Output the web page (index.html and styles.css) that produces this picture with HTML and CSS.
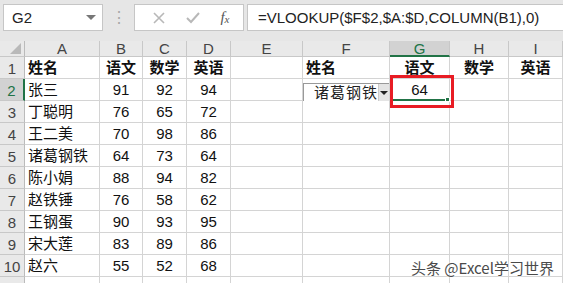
FILE: index.html
```html
<!DOCTYPE html>
<html lang="zh">
<head>
<meta charset="utf-8">
<link rel="stylesheet" href="styles.css">
</head>
<body>
<div class="toolbar">
  <div class="namebox"><span>G2</span><span class="nb-arrow"></span></div>
  <div class="dots">⋮</div>
  <div class="fbtns">
    <svg class="ic" width="14" height="14" viewBox="0 0 14 14"><path d="M2 2L12 12M12 2L2 12" stroke="#b8b8b8" stroke-width="1.6" fill="none"/></svg>
    <svg class="ic" width="16" height="14" viewBox="0 0 16 14"><path d="M2 7L6 11L14 2" stroke="#b8b8b8" stroke-width="2" fill="none"/></svg>
    <span class="fx">f<sub>x</sub></span>
  </div>
  <div class="formula">=VLOOKUP($F$2,$A:$D,COLUMN(B1),0)</div>
</div>
<div class="sheet">
  <div class="corner"><span class="tri"></span></div>
  <div class="ch">A</div><div class="ch">B</div><div class="ch">C</div><div class="ch">D</div><div class="ch">E</div><div class="ch">F</div><div class="ch sel">G</div><div class="ch">H</div><div class="ch">I</div>

  <div class="rh">1</div>
  <div class="c b">姓名</div><div class="c b ctr">语文</div><div class="c b ctr">数学</div><div class="c b ctr">英语</div><div class="c"></div><div class="c b">姓名</div><div class="c b ctr">语文</div><div class="c b ctr">数学</div><div class="c b ctr">英语</div>

  <div class="rh sel">2</div>
  <div class="c">张三</div><div class="c ctr">91</div><div class="c ctr">92</div><div class="c ctr">94</div><div class="c"></div>
  <div class="c"><div class="combo"><span class="combo-t">诸葛钢铁</span><span class="combo-b"><span class="dt"></span></span></div></div>
  <div class="c ctr active">64<span class="selline"></span><span class="handle"></span><span class="redbox"></span></div>
  <div class="c"></div><div class="c"></div>

  <div class="rh">3</div>
  <div class="c">丁聪明</div><div class="c ctr">76</div><div class="c ctr">65</div><div class="c ctr">72</div><div class="c"></div><div class="c"></div><div class="c"></div><div class="c"></div><div class="c"></div>
  <div class="rh">4</div>
  <div class="c">王二美</div><div class="c ctr">70</div><div class="c ctr">98</div><div class="c ctr">86</div><div class="c"></div><div class="c"></div><div class="c"></div><div class="c"></div><div class="c"></div>
  <div class="rh">5</div>
  <div class="c">诸葛钢铁</div><div class="c ctr">64</div><div class="c ctr">73</div><div class="c ctr">64</div><div class="c"></div><div class="c"></div><div class="c"></div><div class="c"></div><div class="c"></div>
  <div class="rh">6</div>
  <div class="c">陈小娟</div><div class="c ctr">88</div><div class="c ctr">94</div><div class="c ctr">82</div><div class="c"></div><div class="c"></div><div class="c"></div><div class="c"></div><div class="c"></div>
  <div class="rh">7</div>
  <div class="c">赵铁锤</div><div class="c ctr">76</div><div class="c ctr">58</div><div class="c ctr">62</div><div class="c"></div><div class="c"></div><div class="c"></div><div class="c"></div><div class="c"></div>
  <div class="rh">8</div>
  <div class="c">王钢蛋</div><div class="c ctr">90</div><div class="c ctr">93</div><div class="c ctr">95</div><div class="c"></div><div class="c"></div><div class="c"></div><div class="c"></div><div class="c"></div>
  <div class="rh">9</div>
  <div class="c">宋大莲</div><div class="c ctr">83</div><div class="c ctr">89</div><div class="c ctr">86</div><div class="c"></div><div class="c"></div><div class="c"></div><div class="c"></div><div class="c"></div>
  <div class="rh">10</div>
  <div class="c">赵六</div><div class="c ctr">55</div><div class="c ctr">52</div><div class="c ctr">68</div><div class="c"></div><div class="c"></div><div class="c"></div><div class="c"></div><div class="c"></div>
  <div class="rh last"></div>
  <div class="c last"></div><div class="c last"></div><div class="c last"></div><div class="c last"></div><div class="c last"></div><div class="c last"></div><div class="c last"></div><div class="c last"></div><div class="c last"></div>
</div>
<div class="wm">头条 @Excel学习世界</div>
</body>
</html>
```

FILE: styles.css
```css
html, body {
  margin: 0;
  padding: 0;
  width: 563px;
  height: 283px;
  overflow: hidden;
  background: #e6e6e6;
  font-family: "Liberation Sans", "Noto Sans CJK SC", sans-serif;
  position: relative;
}
.toolbar {
  height: 41px;
  display: flex;
  align-items: flex-start;
  padding-top: 4px;
  box-sizing: border-box;
}
.namebox {
  margin-left: 3px;
  width: 100px;
  height: 27px;
  box-sizing: border-box;
  background: #fff;
  border: 1px solid #c6c6c6;
  display: flex;
  align-items: center;
  justify-content: space-between;
  padding: 0 6px 0 8px;
  font-size: 15px;
  color: #222;
}
.nb-arrow {
  width: 0;
  height: 0;
  border-left: 5px solid transparent;
  border-right: 5px solid transparent;
  border-top: 5px solid #777;
}
.dots {
  width: 31px;
  text-align: center;
  color: #a8a8a8;
  font-size: 16px;
  line-height: 27px;
}
.fbtns {
  width: 110px;
  height: 27px;
  box-sizing: border-box;
  background: #fff;
  border: 1px solid #c6c6c6;
  display: flex;
  align-items: center;
  justify-content: space-around;
  padding: 0 4px 0 8px;
}
.fx {
  font-family: "Liberation Serif", serif;
  font-style: italic;
  font-size: 15px;
  color: #555;
}
.fx sub { font-size: 11px; vertical-align: -1px; }
.formula {
  margin-left: 3px;
  flex: 1;
  height: 27px;
  box-sizing: border-box;
  background: #fff;
  border: 1px solid #c6c6c6;
  border-right: none;
  padding-left: 10px;
  font-size: 15px;
  line-height: 25px;
  color: #222;
}
.sheet {
  display: grid;
  grid-template-columns: 25px 75px 43px 44px 44px 72px 87px 60px 59px 54px;
  grid-template-rows: 16px repeat(10, 22px) 6px;
  background: #fff;
}
.corner, .ch, .rh {
  background: #e9e9e9;
  color: #444;
  box-sizing: border-box;
  border-right: 1px solid #c8c8c8;
  border-bottom: 1px solid #c8c8c8;
}
.corner {
  position: relative;
  border-right: 1px solid #bbb;
}
.tri {
  position: absolute;
  right: 3px;
  bottom: 2px;
  width: 0;
  height: 0;
  border-left: 11px solid transparent;
  border-bottom: 11px solid #b9b9b9;
}
.ch {
  font-size: 15px;
  text-align: center;
  line-height: 16px;
}
.rh {
  font-size: 15px;
  text-align: center;
  line-height: 24px;
  border-right: 1px solid #bbb;
}
.ch.sel {
  background: #d2d2d2;
  border-bottom: 2px solid #217346;
  color: #217346;
}
.rh.sel {
  background: #d2d2d2;
  border-right: 2px solid #217346;
  color: #217346;
}
.c {
  box-sizing: border-box;
  border-right: 1px solid #d4d4d4;
  border-bottom: 1px solid #d4d4d4;
  font-size: 15px;
  line-height: 22px;
  padding-left: 3px;
  color: #111;
  white-space: nowrap;
  position: relative;
}
.last { border-bottom: none; }
.c.b { font-weight: bold; }
.c.ctr { text-align: center; padding-left: 0; }
.combo {
  position: absolute;
  left: 0;
  top: 4px;
  width: 86px;
  height: 18px;
  box-sizing: border-box;
  border-left: 1px solid #999;
  border-top: 1px solid #999;
  background: #fff;
  display: flex;
  align-items: center;
}
.combo-t {
  flex: 1;
  font-size: 15px;
  letter-spacing: 1px;
  padding-left: 10px;
  color: #222;
}
.combo-b {
  width: 15px;
  height: 17px;
  background: #e4e4e4;
  border-left: 1px solid #ccc;
  display: flex;
  align-items: center;
  justify-content: center;
}
.dt {
  width: 0;
  height: 0;
  border-left: 4px solid transparent;
  border-right: 4px solid transparent;
  border-top: 4px solid #222;
}
.active { overflow: visible; z-index: 2; }
.selline {
  position: absolute;
  left: 2px;
  right: 3px;
  bottom: -1px;
  height: 2px;
  background: #217346;
}
.handle {
  position: absolute;
  right: -1px;
  bottom: -2px;
  width: 5px;
  height: 5px;
  background: #217346;
  border: 1px solid #fff;
  box-sizing: border-box;
}
.redbox {
  position: absolute;
  left: 0;
  top: -4px;
  width: 64px;
  height: 33px;
  box-sizing: border-box;
  border: 3px solid #e81c24;
}
.wm {
  position: absolute;
  left: 411px;
  top: 257px;
  font-size: 15px;
  color: #4a4a4a;
  text-shadow: 0 0 2px #fff, 0 0 2px #fff;
  font-family: "Noto Sans CJK SC", sans-serif;
}
```
